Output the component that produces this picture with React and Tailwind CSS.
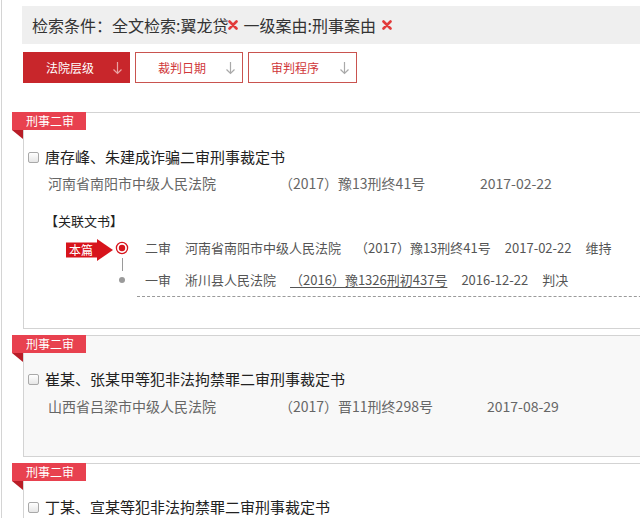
import React from "react";

const RedX = () => (
  <svg width="10" height="10" viewBox="0 0 10 10" className="inline-block">
    <path d="M1.5 1.5 L8.5 8.5 M8.5 1.5 L1.5 8.5" stroke="#e23b3b" strokeWidth="2.6" strokeLinecap="round" />
  </svg>
);

const DownArrow = ({ color }) => (
  <svg width="11" height="14" viewBox="0 0 11 14">
    <path d="M5.5 1 V12.5 M1.5 8.5 L5.5 12.5 L9.5 8.5" stroke={color} strokeWidth="1.2" fill="none" />
  </svg>
);

const Tag = () => (
  <div className="absolute left-[-12px] top-[-1px]">
    <div className="w-[74px] h-[18px] bg-[#e8414f] text-white text-[12px] leading-[18px] pl-[14px]">
      刑事二审
    </div>
    <svg width="11" height="9" viewBox="0 0 11 9" className="block">
      <polygon points="0,0 11,0 11,9" fill="#b81d27" />
    </svg>
  </div>
);

const Checkbox = () => (
  <span className="w-[11px] h-[11px] rounded-[2px] border border-[#a9a9a9] bg-gradient-to-b from-white to-[#e6e6e6] shrink-0" />
);

const filters = [
  { label: "法院层级", active: true, w: "w-[107px]" },
  { label: "裁判日期", active: false, w: "w-[108px]" },
  { label: "审判程序", active: false, w: "w-[109px]" },
];

const cases = [
  {
    title: "唐存峰、朱建成诈骗二审刑事裁定书",
    court: "河南省南阳市中级人民法院",
    no: "（2017）豫13刑终41号",
    noW: "w-[201px]",
    date: "2017-02-22",
    related: true,
    bg: "bg-white",
  },
  {
    title: "崔某、张某甲等犯非法拘禁罪二审刑事裁定书",
    court: "山西省吕梁市中级人民法院",
    no: "（2017）晋11刑终298号",
    noW: "w-[208px]",
    date: "2017-08-29",
    related: false,
    bg: "bg-[#f8f8f8]",
  },
  {
    title: "丁某、宣某等犯非法拘禁罪二审刑事裁定书",
    court: "",
    no: "",
    noW: "",
    date: "",
    related: false,
    bg: "bg-white",
  },
];

const Related = () => (
  <>
    <div className="mt-[18px] pl-[21px] text-[13px] leading-[20px] text-[#222]">【关联文书】</div>
    <div className="mt-[7px] flex">
      <div className="w-[121px] shrink-0 flex flex-col">
        <div className="h-[20px] flex items-center pl-[42px]">
          <div className="relative w-[48px] h-[22px] mt-[3px]">
            <svg width="48" height="22" viewBox="0 0 48 22" className="absolute inset-0">
              <rect x="0" y="3.5" width="34" height="15" fill="#d7141c" />
              <polygon points="31,0 47,11 31,22" fill="#d7141c" />
            </svg>
            <span className="absolute left-[3px] top-[3px] text-white text-[12px] leading-[16px]">本篇</span>
          </div>
          <svg width="14" height="14" viewBox="0 0 14 14" className="ml-[1px]">
            <circle cx="7" cy="7" r="5.6" stroke="#d7141c" strokeWidth="1.3" fill="white" />
            <circle cx="7" cy="7" r="3.2" fill="#d7141c" />
          </svg>
        </div>
        <div className="ml-[98px] w-px h-[13px] bg-[#9a9a9a]" />
        <div className="ml-[95px] mt-[6px] w-[6px] h-[6px] rounded-full bg-[#9a9a9a]" />
      </div>
      <div className="flex flex-col text-[13px] leading-[20px] text-[#555]">
        <div className="flex gap-[14px] whitespace-nowrap">
          <span>二审</span>
          <span>河南省南阳市中级人民法院</span>
          <span>（2017）豫13刑终41号</span>
          <span>2017-02-22</span>
          <span>维持</span>
        </div>
        <div className="mt-[12px] flex gap-[14px] whitespace-nowrap">
          <span>一审</span>
          <span>淅川县人民法院</span>
          <span className="underline underline-offset-2">（2016）豫1326刑初437号</span>
          <span>2016-12-22</span>
          <span>判决</span>
        </div>
      </div>
    </div>
    <div className="ml-[113px] mt-[6px] border-t border-dashed border-[#9a9a9a]" />
  </>
);

export default function App() {
  return (
    <div className="w-[640px] h-[518px] overflow-hidden bg-white font-['Noto_Sans_CJK_SC',sans-serif]">
      <div className="ml-px h-full border-l border-[#d4d4d4] overflow-hidden">
        <div className="ml-[20px] mt-[6px] h-[38px] w-[640px] bg-[#efefef] flex items-center pl-[10px] text-[16px] text-[#333] whitespace-nowrap">
          <span>检索条件：全文检索:翼龙贷</span>
          <RedX />
          <span className="ml-[5px]">一级案由:刑事案由</span>
          <span className="ml-[6px] flex items-center"><RedX /></span>
        </div>

        <div className="ml-[21px] mt-[8px] flex gap-[5px]">
          {filters.map((f) => (
            <div
              key={f.label}
              className={`${f.w} h-[31px] flex items-center justify-between pl-[22px] pr-[6px] text-[12px] border ${
                f.active
                  ? "bg-[#c8262b] border-[#c8262b] text-white"
                  : "bg-white border-[#c9534f] text-[#d0373a]"
              }`}
            >
              <span>{f.label}</span>
              <DownArrow color={f.active ? "#eaa3a3" : "#a9a9a9"} />
            </div>
          ))}
        </div>

        {cases.map((c, i) => (
          <div
            key={c.title}
            className={`relative ml-[21px] w-[660px] border border-[#d3d3d3] ${c.bg} ${
              i === 0 ? "mt-[29px] pt-[34px] pb-[31px]" : "mt-[6px] pt-[33px] pb-[40px]"
            }`}
          >
            <Tag />
            <div className="flex items-center gap-[6px] pl-[4px] text-[15px] leading-[20px] text-[#222]">
              <Checkbox />
              <span>{c.title}</span>
            </div>
            {c.court && (
              <div className={`${i === 0 ? "mt-[6px]" : "mt-[7px]"} flex pl-[24px] text-[14px] leading-[20px] text-[#666] whitespace-nowrap`}>
                <span className="w-[231px]">{c.court}</span>
                <span className={c.noW}>{c.no}</span>
                <span>{c.date}</span>
              </div>
            )}
            {c.related && <Related />}
          </div>
        ))}
      </div>
    </div>
  );
}
